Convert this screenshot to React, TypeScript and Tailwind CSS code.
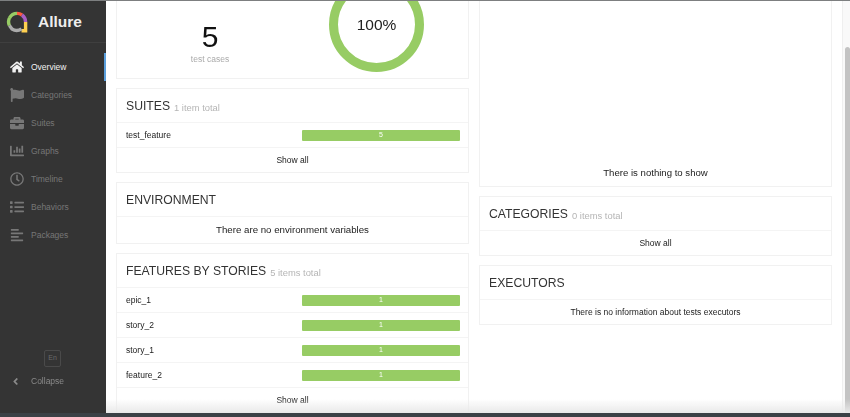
import { FaHome, FaFlag, FaBriefcase, FaChartBar, FaRegClock, FaList, FaAlignLeft, FaAngleLeft } from "react-icons/fa";
import type { ReactNode } from "react";

const nav = [
  { label: "Overview", Icon: FaHome, active: true },
  { label: "Categories", Icon: FaFlag },
  { label: "Suites", Icon: FaBriefcase },
  { label: "Graphs", Icon: FaChartBar },
  { label: "Timeline", Icon: FaRegClock },
  { label: "Behaviors", Icon: FaList },
  { label: "Packages", Icon: FaAlignLeft },
];

function Logo() {
  return (
    <svg width="22" height="22" viewBox="0 0 22 22" fill="none" strokeWidth="3.4">
      <path d="M3.4 14.5 A8.6 8.6 0 0 1 3.6 6.8" stroke="#97cc64" />
      <path d="M3.6 6.8 A8.6 8.6 0 0 1 11 2.4" stroke="#97cc64" />
      <path d="M11 2.4 A8.6 8.6 0 0 1 16 4" stroke="#fd5a3e" />
      <path d="M16 4 A8.6 8.6 0 0 1 19.6 11" stroke="#a95fc4" />
      <path d="M19.6 11 L19.6 19.8 L15.5 19.8" stroke="#ffd050" />
      <path d="M15.5 17.8 A8.6 8.6 0 0 1 6 18 L3.4 14.5" stroke="#aaaaaa" />
    </svg>
  );
}

function Card({ title, sub, children, className = "" }: { title: string; sub?: string; children: ReactNode; className?: string }) {
  return (
    <section className={`border border-[#f1f1f1] bg-white ${className}`}>
      <div className="flex h-[34px] items-center border-b border-[#f4f4f4] px-[9px] pt-[2px]">
        <h2 className="text-[12.2px] leading-none text-[#333]">{title}</h2>
        {sub && <span className="ml-[4px] mt-[2px] text-[9.4px] leading-none text-[#b5b5b5]">{sub}</span>}
      </div>
      {children}
    </section>
  );
}

function Row({ name, value }: { name: string; value: number }) {
  return (
    <div className="flex h-[25px] items-center border-b border-[#f4f4f4] pl-[9px] pr-[8px]">
      <span className="flex-1 text-[8.5px] text-[#222]">{name}</span>
      <div className="flex h-[11px] w-[158px] items-center justify-center rounded-[1px] bg-[#97cc64] text-[7px] text-white">{value}</div>
    </div>
  );
}

function ShowAll() {
  return <div className="flex h-[24px] items-center justify-center text-[8.5px] text-[#222]">Show all</div>;
}

export default function App() {
  return (
    <div className="flex h-[417px] w-[850px] flex-col overflow-hidden bg-white font-['Liberation_Sans',Arial,sans-serif]">
      <div className="h-px shrink-0 bg-[#7d7f80]" />
      <div className="relative flex min-h-0 flex-1 blur-[0.4px]">
        <aside className="flex w-[106px] shrink-0 flex-col bg-[#343434]">
          <div className="flex h-[42px] shrink-0 items-center gap-[10px] border-b border-[#3f3f3f] pl-[6px]">
            <Logo />
            <span className="text-[15.5px] font-bold text-[#eeeeee]">Allure</span>
          </div>
          <nav className="flex flex-col pt-[10px]">
            {nav.map(({ label, Icon, active }) => (
              <div key={label} className={`flex h-[28px] items-center border-r-2 pl-[10px] ${active ? "border-[#5b9fdc] text-[#f2f2f2]" : "border-transparent text-[#777777]"}`}>
                <span className="flex w-[21px] shrink-0"><Icon size={14} /></span>
                <span className="text-[8.5px]">{label}</span>
              </div>
            ))}
          </nav>
          <div className="mt-auto flex flex-col pb-[24px]">
            <div className="ml-[44px] flex h-[17px] w-[17px] items-center justify-center rounded-[2px] border border-[#4a4a4a] text-[7px] text-[#6a6a6a]">En</div>
            <div className="mt-[6px] flex h-[16px] items-center pl-[10px] text-[#8a8a8a]">
              <span className="flex w-[21px] shrink-0"><FaAngleLeft size={11} /></span>
              <span className="text-[8.5px]">Collapse</span>
            </div>
          </div>
        </aside>

        <main className="flex min-w-0 flex-1 gap-[10px] pl-[10px]">
          <div className="flex w-[353px] shrink-0 flex-col gap-[9px]">
            <section className="flex h-[78px] shrink-0 items-start border border-t-0 border-[#f1f1f1]">
              <div className="flex w-[186px] flex-col items-center pt-[19px]">
                <span className="text-[30px] leading-[34px] text-[#111]">5</span>
                <span className="text-[8.5px] leading-[10px] text-[#aaaaaa]">test cases</span>
              </div>
              <div className="relative ml-[26px] h-[71px] w-[95px] overflow-hidden">
                <div className="absolute -top-[24px] left-0 flex h-[95px] w-[95px] items-center justify-center rounded-full border-[9px] border-[#97cc64]">
                  <span className="text-[15.5px] text-[#222]">100%</span>
                </div>
              </div>
            </section>
            <Card title="SUITES" sub="1 item total">
              <Row name="test_feature" value={5} />
              <ShowAll />
            </Card>
            <Card title="ENVIRONMENT">
              <div className="flex h-[26px] items-center justify-center text-[9.7px] text-[#222]">There are no environment variables</div>
            </Card>
            <Card title="FEATURES BY STORIES" sub="5 items total" className="min-h-0 flex-1">
              <Row name="epic_1" value={1} />
              <Row name="story_2" value={1} />
              <Row name="story_1" value={1} />
              <Row name="feature_2" value={1} />
              <ShowAll />
            </Card>
          </div>

          <div className="flex w-[353px] shrink-0 flex-col gap-[9px]">
            <section className="flex h-[186px] shrink-0 items-end justify-center border border-t-0 border-[#f1f1f1] pb-[6px] text-[9.6px] text-[#222]">
              There is nothing to show
            </section>
            <Card title="CATEGORIES" sub="0 items total">
              <ShowAll />
            </Card>
            <Card title="EXECUTORS">
              <div className="flex h-[24px] items-center justify-center text-[8.5px] text-[#222]">There is no information about tests executors</div>
            </Card>
          </div>

          <div className="ml-auto flex w-[8px] shrink-0 flex-col border-l border-[#efefef] bg-[#f9f9f9] pt-[46px] pl-[2px]">
            <div className="flex-1 rounded-t-[3px] bg-[#c3c3c3]" />
          </div>
        </main>
        <div className="pointer-events-none absolute bottom-0 left-[106px] right-0 h-[14px] bg-gradient-to-b from-transparent to-[#e9e9e9]" />
      </div>
      <div className="h-[4px] shrink-0 bg-[#3b4146]" />
    </div>
  );
}
